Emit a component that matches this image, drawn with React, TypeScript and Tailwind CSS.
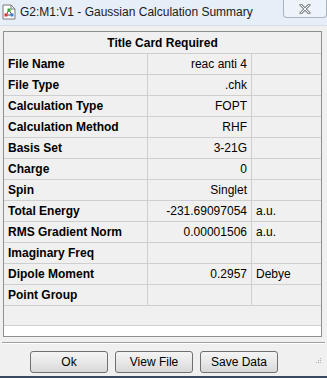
import React from 'react';

type Row = { label: string; value: string; unit?: string };

const ROWS: Row[] = [
  { label: 'File Name', value: 'reac anti 4' },
  { label: 'File Type', value: '.chk' },
  { label: 'Calculation Type', value: 'FOPT' },
  { label: 'Calculation Method', value: 'RHF' },
  { label: 'Basis Set', value: '3-21G' },
  { label: 'Charge', value: '0' },
  { label: 'Spin', value: 'Singlet' },
  { label: 'Total Energy', value: '-231.69097054', unit: 'a.u.' },
  { label: 'RMS Gradient Norm', value: '0.00001506', unit: 'a.u.' },
  { label: 'Imaginary Freq', value: '' },
  { label: 'Dipole Moment', value: '0.2957', unit: 'Debye' },
  { label: 'Point Group', value: '' },
];

const FONT = { fontFamily: '"Liberation Sans", Arial, sans-serif' };

function AppIcon() {
  return (
    <svg width="14" height="16" viewBox="0 0 14 16" className="shrink-0">
      <path d="M1 1h8l4 4v10H1z" fill="#fff" stroke="#7a7a7a" />
      <path d="M9 1v4h4" fill="none" stroke="#7a7a7a" />
      <line x1="7" y1="6" x2="4" y2="11" stroke="#555" />
      <line x1="7" y1="6" x2="10" y2="11" stroke="#555" />
      <line x1="4" y1="11" x2="10" y2="11" stroke="#555" />
      <rect x="5.5" y="4.5" width="3" height="3" fill="#2faa2f" />
      <rect x="2.5" y="9.5" width="3" height="3" fill="#d33" />
      <rect x="8.5" y="9.5" width="3" height="3" fill="#3a7ad8" />
    </svg>
  );
}

function Btn({ children }: { children: React.ReactNode }) {
  return (
    <button className="w-[78px] h-[22px] rounded-[3px] border border-[#707070] bg-gradient-to-b from-[#f4f4f4] via-[#e8e8e8] to-[#d8d8d8] text-[12px] text-black">
      {children}
    </button>
  );
}

export default function App() {
  return (
    <div className="w-[327px] h-[378px] flex flex-col bg-[#f0f0f0] text-black overflow-hidden" style={FONT}>
      {/* title bar */}
      <div className="h-[26px] flex items-start bg-[#e6eef8] border-b border-[#d6dde6]">
        <div className="flex items-center gap-[4px] pl-[2px] pt-[4px]">
          <AppIcon />
          <span className="text-[12px] leading-[16px] text-[#1a1a1a]">
            G2:M1:V1 - Gaussian Calculation Summary
          </span>
        </div>
        <div className="ml-auto w-[44px] h-[18px] border border-t-0 border-[#a9b4c2] rounded-b-[4px] bg-[#eef3f9] flex items-center justify-center">
          <svg width="12" height="10" viewBox="0 0 12 10">
            <path d="M2 1l8 8M10 1l-8 8" stroke="#8a8f96" strokeWidth="3" strokeLinecap="square" />
            <path d="M2 1l8 8M10 1l-8 8" stroke="#f4f6f8" strokeWidth="1" />
          </svg>
        </div>
      </div>

      {/* summary table */}
      <div className="pt-[5px] px-[3px]">
        <div className="w-[319px] border border-[#8e8f8f] bg-[#f0f0f0]">
          <div className="h-[22px] border-b border-[#cfcfcf] flex items-center justify-center font-bold text-[12px]">
            Title Card Required
          </div>
          {ROWS.map((r) => (
            <div key={r.label} className="h-[21px] flex border-b border-[#cfcfcf] text-[12px]">
              <div className="w-[144px] border-r border-[#cfcfcf] pl-[4px] flex items-center font-bold">{r.label}</div>
              <div className="w-[104px] border-r border-[#cfcfcf] pr-[4px] flex items-center justify-end">{r.value}</div>
              <div className="flex-1 pl-[4px] flex items-center">{r.unit}</div>
            </div>
          ))}
          <div className="h-[20px] border-b border-[#cfcfcf]" />
          <div className="h-[10px] bg-white" />
        </div>
      </div>

      {/* separator */}
      <div className="mt-[5px] mx-[2px] border-t border-[#a0a0a0] border-b border-b-white" />

      {/* buttons */}
      <div className="relative flex gap-[7px] pl-[30px] pt-[7px]">
        <Btn>Ok</Btn>
        <Btn>View File</Btn>
        <Btn>Save Data</Btn>
        <div className="absolute right-[6px] top-[14px] grid grid-cols-3 gap-[1px]">
          {[0, 1, 2, 3, 4, 5, 6, 7, 8].map((i) => (
            <span key={i} className={i === 0 || i === 1 || i === 3 ? 'w-[1px] h-[1px]' : 'w-[1px] h-[1px] bg-[#b0b0b0]'} />
          ))}
        </div>
      </div>

      <div className="mt-auto h-[2px] bg-[#3a4a5e]" />
    </div>
  );
}
